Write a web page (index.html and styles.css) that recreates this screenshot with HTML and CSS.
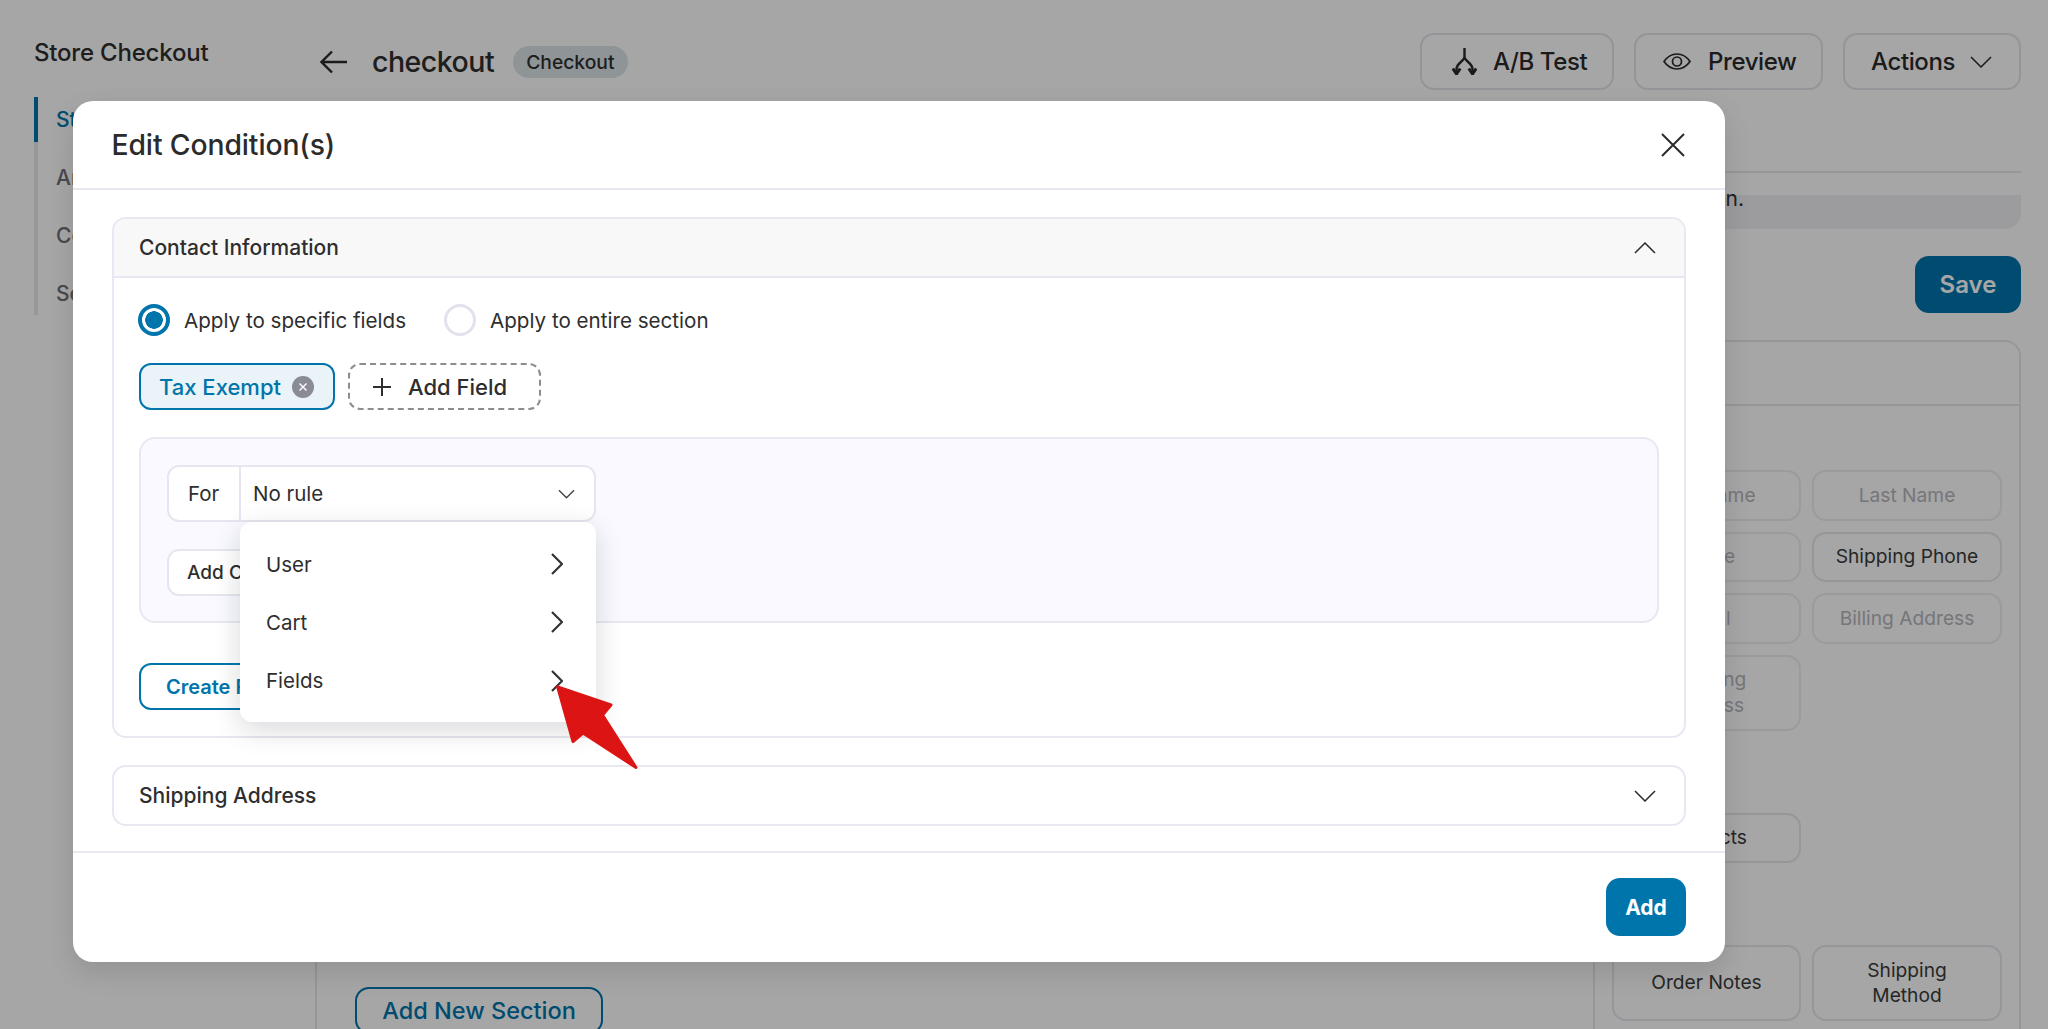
FILE: index.html
```html
<!DOCTYPE html>
<html lang="en">
<head>
<meta charset="utf-8">
<title>Edit Condition(s)</title>
<link rel="stylesheet" href="styles.css">
</head>
<body>
<div class="page">
  <aside class="side">
    <h2 class="side-title">Store Checkout</h2>
    <nav class="side-nav">
      <a class="side-link active">Steps</a>
      <a class="side-link">Analytics</a>
      <a class="side-link">Contacts</a>
      <a class="side-link">Settings</a>
    </nav>
  </aside>
  <main class="main">
    <header class="head">
      <svg class="back" viewBox="0 0 28 24"><path d="M27 12H2M12 1.500 1.500 12 12 22.500"/></svg>
      <h1 class="page-name">checkout</h1>
      <span class="badge">Checkout</span>
      <div class="head-actions">
        <button class="btn-out ab">
          <svg class="ic-ab" viewBox="0 0 25 27"><path d="M12.500 0v9M12.500 9c0 4-8 6-8 12v5M12.500 9c0 4 8 6 8 12v5"/><path class="ab-head" d="M.800 20.500l3.700 5.500 3.700-5.500M16.800 20.500l3.700 5.500 3.700-5.500"/></svg>
          A/B Test
        </button>
        <button class="btn-out pv">
          <svg class="ic-eye" viewBox="0 0 28 17"><path d="M1 8.500C4.500 3.500 9 1 14 1s9.500 2.500 13 7.500C23.500 13.500 19 16 14 16S4.500 13.500 1 8.500Z"/><circle cx="14" cy="8.500" r="4.500"/></svg>
          Preview
        </button>
        <button class="btn-out ac">
          Actions
          <svg class="ic-chev-lg" viewBox="0 0 22 12"><path d="M1 1l10 10L21 1"/></svg>
        </button>
      </div>
    </header>
    <div class="tabs-rule"></div>
    <div class="notice"><p class="notice-text">Fields can be shown or hidden based on a condition.</p></div>
    <div class="save-row"><button class="btn-save">Save</button></div>
    <div class="workspace">
      <section class="canvas">
        <button class="btn-section">Add New Section</button>
      </section>
      <section class="fields">
        <div class="fields-head"></div>
        <h3 class="group-label first">Contact</h3>
        <div class="chips">
          <span class="chip off">First Name</span>
          <span class="chip off">Last Name</span>
          <span class="chip off">Phone</span>
          <span class="chip">Shipping Phone</span>
          <span class="chip off">Email</span>
          <span class="chip off">Billing Address</span>
          <span class="chip off tall">Shipping<br>Address</span>
        </div>
        <h3 class="group-label">Products</h3>
        <div class="chips">
          <span class="chip">Products</span>
        </div>
        <h3 class="group-label">Other</h3>
        <div class="chips">
          <span class="chip tall">Order Notes</span>
          <span class="chip tall">Shipping<br>Method</span>
        </div>
      </section>
    </div>
  </main>
</div>

<div class="overlay">
  <div class="modal">
    <header class="modal-head">
      <h2 class="modal-title">Edit Condition(s)</h2>
      <svg class="ic-close" viewBox="0 0 24 24"><path d="M1 1l22 22M23 1 1 23"/></svg>
    </header>
    <div class="modal-body">
      <section class="panel">
        <div class="panel-head shaded">
          <span>Contact Information</span>
          <svg class="ic-toggle" viewBox="0 0 22 12"><path d="M1 11 11 1l10 10"/></svg>
        </div>
        <div class="panel-content">
          <div class="radios">
            <label class="radio-item"><span class="radio on"></span>Apply to specific fields</label>
            <label class="radio-item"><span class="radio"></span>Apply to entire section</label>
          </div>
          <div class="tags">
            <span class="tag">Tax Exempt
              <svg class="ic-tag-x" viewBox="0 0 22 22"><circle cx="11" cy="11" r="11"/><path d="M7.500 7.500l7 7M14.500 7.500l-7 7"/></svg>
            </span>
            <span class="add-field">
              <svg class="ic-plus" viewBox="0 0 20 20"><path d="M10 1v18M1 10h18"/></svg>
              Add Field
            </span>
          </div>
          <div class="rule-box">
            <div class="rule-select">
              <span class="rule-for">For</span>
              <span class="rule-value">No rule
                <svg class="ic-chev-sm" viewBox="0 0 18 10"><path d="M1 1l8 8 8-8"/></svg>
              </span>
              <div class="menu">
                <div class="menu-item">User<svg class="ic-right" viewBox="0 0 12 22"><path d="M1 1l10 10L1 21"/></svg></div>
                <div class="menu-item">Cart<svg class="ic-right" viewBox="0 0 12 22"><path d="M1 1l10 10L1 21"/></svg></div>
                <div class="menu-item">Fields<svg class="ic-right" viewBox="0 0 12 22"><path d="M1 1l10 10L1 21"/></svg></div>
              </div>
            </div>
            <button class="btn-add-cond">Add Condition</button>
          </div>
          <button class="btn-create">Create Rule</button>
        </div>
      </section>
      <section class="panel">
        <div class="panel-head">
          <span>Shipping Address</span>
          <svg class="ic-toggle" viewBox="0 0 22 12"><path d="M1 1l10 10L21 1"/></svg>
        </div>
      </section>
    </div>
    <footer class="modal-foot"><button class="btn-add">Add</button></footer>
  </div>
</div>

<svg class="pointer" viewBox="0 0 90 90">
  <path d="M2.700 2 56 20 47.500 30 81 82.500 28 48 18 56.500Z"/>
</svg>
</body>
</html>
```
FILE: styles.css
```css
* { box-sizing: border-box; }
html, body { margin: 0; height: 1029px; overflow: hidden; }
body { font-family: Inter, "Noto Sans", sans-serif; background: #fff; color: #2e2e2e; position: relative; }
h1, h2, h3, p { margin: 0; font-weight: 500; }
button { font-family: inherit; cursor: pointer; background: #fff; }
svg { fill: none; stroke: currentColor; flex: none; display: block; }

.page { display: grid; grid-template-columns: 315px 1fr; height: 1029px; overflow: hidden; }

.side { padding: 37px 0 0 34px; }
.side-title { font-size: 24px; line-height: 32px; font-weight: 500; letter-spacing: -.2px; }
.side-nav { display: flex; flex-direction: column; margin-top: 28px; border-left: 4px solid #e6e6ee; }
.side-link { height: 58px; margin-left: -4px; border-left: 4px solid transparent; padding: 0 0 0 18px; font-size: 21px; line-height: 46px; font-weight: 500; color: #6f6f78; }
.side-link.active { color: #0075ac; border-left-color: #0075ac; height: 45px; margin-bottom: 13px; }
.side-link:last-child { height: 44px; }

.main { padding: 33px 27px 0 0; min-width: 0; }
.head { display: flex; align-items: center; height: 57px; padding-left: 5px; }
.back { width: 28px; height: 24px; stroke-width: 2.400; color: #2a2a2a; margin-right: 24px; }
.page-name { font-size: 28.500px; font-weight: 500; letter-spacing: -.5px; }
.badge { margin: 0 0 0 19px; height: 32px; padding: 0 13px; display: flex; align-items: center; border-radius: 16px; background: #dce4e8; font-size: 19.300px; font-weight: 500; }
.head-actions { margin-left: auto; display: flex; gap: 20px; }
.btn-out { height: 57px; display: flex; align-items: center; gap: 16px; border: 2px solid #e4e4ec; border-radius: 14px; font-size: 24px; font-weight: 500; letter-spacing: -.4px; color: #2a2a2a; }
.ab { width: 194px; padding: 0 0 0 30px; }
.pv { width: 189px; padding: 0 0 0 27px; gap: 17px; }
.ac { width: 178px; padding: 0 0 0 26px; gap: 15px; }
.ic-ab { width: 25px; height: 27px; stroke-width: 2.400; }
.ab-head { stroke-width: 3; }
.ic-eye { width: 28px; height: 17px; stroke-width: 1.700; }
.ic-chev-lg { width: 22px; height: 12px; stroke-width: 1.500; }

.tabs-rule { height: 83px; border-bottom: 2px solid #e6e6ee; }
.notice { margin-top: 22px; height: 34px; background: #f0f0f3; border-radius: 0 0 16px 16px; }
.notice-text { width: 1429px; text-align: right; font-size: 21px; line-height: 22px; font-weight: 400; position: relative; top: -7px; color: #333; }
.save-row { margin-top: 27px; display: flex; justify-content: flex-end; }
.btn-save { width: 106px; height: 57px; border: 0; border-radius: 14px; background: #0075ac; color: #fff; font-size: 24px; font-weight: 600; }

.workspace { display: grid; grid-template-columns: 1278px 428px; margin-top: 27px; height: 800px; }
.canvas { border-left: 2px solid #e6e6ee; padding: 647px 0 0 38px; }
.btn-section { width: 248px; height: 47px; border: 2px solid #0075ac; border-radius: 14px; color: #0075ac; font-size: 23.500px; font-weight: 500; background: #fff; }
.fields { border: 2px solid #e6e6ee; border-radius: 0 16px 0 0; padding: 0 17px; }
.fields-head { height: 64px; border-bottom: 2px solid #e6e6ee; margin: 0 -17px; }
.group-label { height: 82px; font-size: 18px; color: #333; padding-top: 24px; }
.group-label.first { height: 64px; }
.chips { display: grid; grid-template-columns: 189px 190px; gap: 11px; }
.chip { min-height: 50.500px; display: flex; align-items: center; justify-content: center; text-align: center; border: 2px solid #e6e6ee; border-radius: 14px; font-size: 19.200px; line-height: 25.500px; color: #3b3b3b; }
.chip.off { color: #b6b6bc; border-color: #eeeef3; }
.chip.tall { min-height: 76px; }

.overlay { position: absolute; inset: 0; z-index: 1; background: rgba(0,0,0,.35); padding: 101px 0 0 72.500px; }
.modal { width: 1652.500px; height: 861px; background: #fff; border-radius: 20px; display: flex; flex-direction: column; box-shadow: 0 10px 28px rgba(0,0,0,.12); }
.modal-head { height: 89px; flex: none; display: flex; align-items: center; justify-content: space-between; padding: 0 40px 0 39px; border-bottom: 2px solid #e8e8f2; }
.modal-title { font-size: 28.300px; font-weight: 500; letter-spacing: -.1px; color: #2b2b2b; }
.ic-close { width: 24px; height: 24px; stroke-width: 2; color: #2b2b2b; }
.modal-body { flex: 1; padding: 27px 39px 0 39.500px; display: flex; flex-direction: column; gap: 27px; border-bottom: 2px solid #e8e8f2; }
.panel { border: 2px solid #e8e8f2; border-radius: 14px; overflow: visible; }
.panel-head { height: 57px; display: flex; align-items: center; justify-content: space-between; padding: 0 28px 0 25px; font-size: 21px; font-weight: 500; color: #2e2e2e; border-radius: 12px; }
.panel-head.shaded { height: 59px; background: #f8f8f8; border-bottom: 2px solid #e8e8f2; border-radius: 12px 12px 0 0; }
.ic-toggle { width: 22px; height: 12px; stroke-width: 1.500; color: #2b2b2b; }
.panel-content { padding: 26px 25px 26px 25px; display: flex; flex-direction: column; align-items: flex-start; }
.radios { display: flex; gap: 38px; height: 32px; margin-left: -1px; }
.radio-item { display: flex; align-items: center; gap: 14px; font-size: 20.600px; }
.radio { width: 32px; height: 32px; border-radius: 50%; border: 3px solid #e2e2ee; background: #fff; }
.radio.on { border: 4px solid #0075ac; background: radial-gradient(circle, #0075ac 0 8.500px, #fff 9px); }
.tags { display: flex; gap: 13px; margin-top: 27px; }
.tag { width: 196px; height: 47px; display: flex; align-items: center; gap: 11px; padding-left: 18px; border: 2px solid #0075ac; border-radius: 12px; background: #eaf3f7; color: #0075ac; font-size: 22px; font-weight: 500; }
.ic-tag-x { width: 22px; height: 22px; fill: #8b8b96; stroke: none; }
.ic-tag-x path { stroke: #fff; stroke-width: 1.400; fill: none; }
.add-field { width: 193px; height: 47px; display: flex; align-items: center; gap: 16px; padding-left: 22px; border: 2px dashed #8d8d8d; border-radius: 12px; font-size: 22px; font-weight: 500; color: #2e2e2e; }
.ic-plus { width: 20px; height: 20px; stroke-width: 2; }
.rule-box { align-self: stretch; margin-top: 27px; height: 186px; padding: 26px 26px 0; border: 2px solid #e8e8f2; border-radius: 16px; background: #f9f9ff; }
.rule-select { position: relative; width: 429px; height: 57px; display: flex; border: 2px solid #e6e6f0; border-radius: 12px; background: #fff; font-size: 20.500px; }
.rule-for { width: 72px; display: flex; align-items: center; padding-left: 19px; border-right: 2px solid #e6e6f0; }
.rule-value { flex: 1; display: flex; align-items: center; justify-content: space-between; padding: 0 19px 0 12px; }
.ic-chev-sm { width: 17px; height: 10px; stroke-width: 1.500; color: #444; }
.menu { position: absolute; left: 71px; top: 55px; width: 356px; height: 200px; padding: 13px 0 12px; background: #fff; border-radius: 12px; box-shadow: 0 8px 28px rgba(20,20,40,.16); z-index: 2; }
.menu-item { height: 58.300px; display: flex; align-items: center; justify-content: space-between; padding: 0 33px 0 26px; font-size: 20.500px; color: #2e2e2e; }
.ic-right { width: 12px; height: 22px; stroke-width: 2.200; color: #333; }
.btn-add-cond { display: block; margin-top: 27px; width: 200px; height: 47px; padding: 0 0 0 18px; text-align: left; border: 2px solid #e6e6f0; border-radius: 12px; font-size: 19px; font-weight: 500; color: #2e2e2e; }
.btn-create { margin-top: 40px; width: 200px; height: 47px; padding: 0 0 0 25px; text-align: left; border: 2px solid #0075ac; border-radius: 12px; color: #0075ac; font-size: 20px; font-weight: 600; }
.modal-foot { height: 109px; flex: none; display: flex; justify-content: flex-end; padding: 25px 39px 0 0; }
.btn-add { width: 80px; height: 58px; border: 0; border-radius: 14px; background: #0075ac; color: #fff; font-size: 21px; font-weight: 700; }

.pointer { position: absolute; left: 555px; top: 685px; z-index: 2; width: 90px; height: 90px; fill: #dc1414; stroke: #dc1414; stroke-width: 3; stroke-linejoin: round; }
```
